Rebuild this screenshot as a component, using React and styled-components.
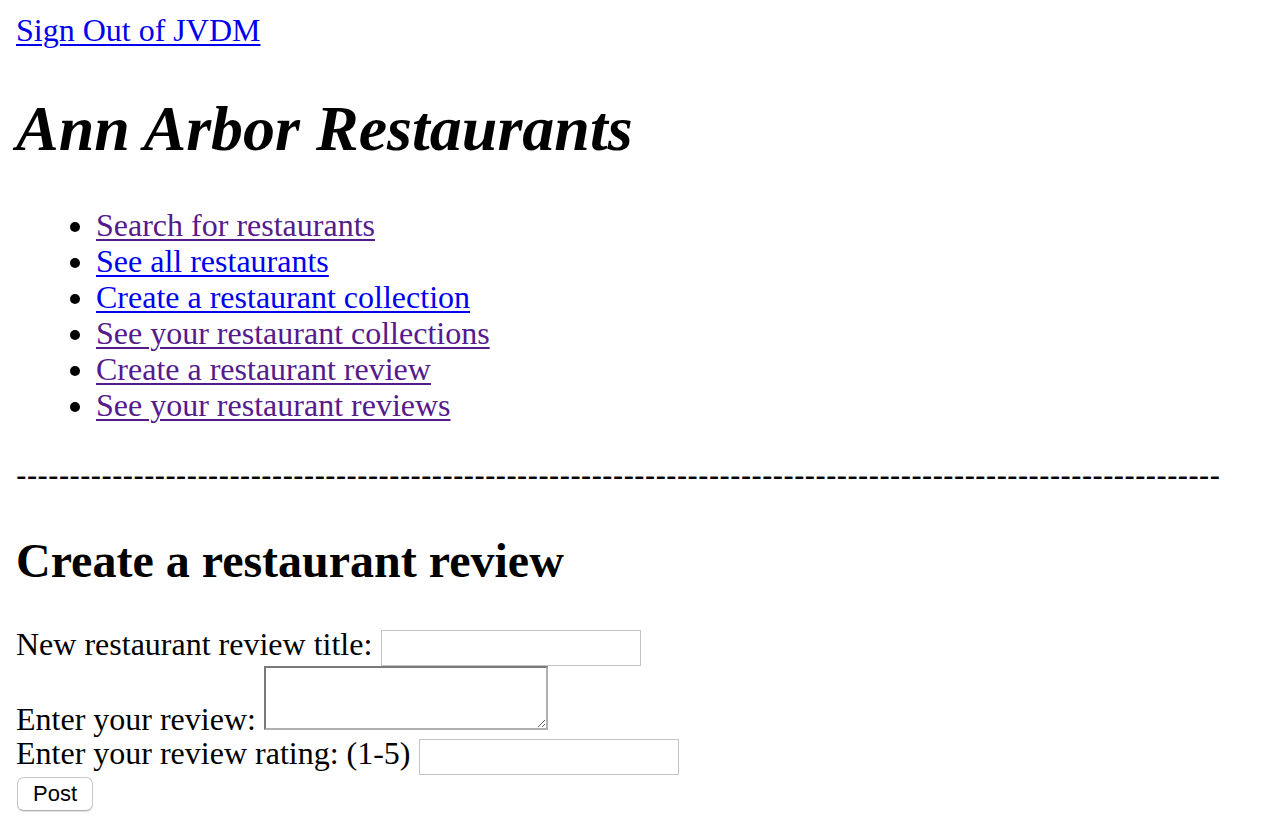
import styled, { createGlobalStyle } from 'styled-components';

const GlobalStyle = createGlobalStyle`
  html, body {
    margin: 0;
    padding: 0;
    background: #fff;
  }
  body {
    padding: 12px 16px 16px;
    font-family: "Liberation Serif", "Times New Roman", serif;
    font-size: 32px;
    line-height: 36px;
    color: #000;
  }
`;

const Link = styled.a`
  color: ${({ $visited }) => ($visited ? '#551a8b' : '#0000ee')};
  text-decoration: underline;
  text-underline-offset: 3px;
  text-decoration-thickness: 2px;
  cursor: pointer;
`;

const Title = styled.h1`
  font-size: 64px;
  line-height: 74px;
  font-style: italic;
  font-weight: 700;
  margin: 44px 0 41px;
`;

const NavList = styled.ul`
  margin: 0 0 34px;
  padding-left: 80px;
  list-style: disc;

  & > li {
    line-height: 36px;
  }
`;

const Divider = styled.div`
  font-family: "Liberation Sans", Arial, sans-serif;
  font-size: 32px;
  line-height: 36px;
  white-space: nowrap;
  overflow: hidden;
  margin: 0;
`;

const SectionTitle = styled.h2`
  font-size: 48px;
  line-height: 56px;
  font-weight: 700;
  margin: 40px 0 37px;
`;

const Form = styled.form`
  margin: 0;
`;

const Row = styled.div`
  line-height: 36px;
  margin-top: ${({ $pull }) => ($pull ? `-${$pull}px` : '0')};
`;

const TextInput = styled.input`
  box-sizing: border-box;
  width: 260px;
  height: 36px;
  border: 1px solid #c4c4c4;
  padding: 2px 4px;
  margin: 0 0 0 ${({ $gap }) => ($gap != null ? $gap : 1)}px;
  font-size: 22px;
  vertical-align: baseline;
  outline: none;
`;

const TextArea = styled.textarea`
  box-sizing: border-box;
  width: 284px;
  height: 64px;
  border: 2px solid #7a7a7a;
  border-right-color: #b0b0b0;
  border-bottom-color: #b0b0b0;
  margin: 0;
  padding: 2px;
  font-size: 22px;
  vertical-align: baseline;
  resize: both;
  outline: none;
`;

const Button = styled.button`
  box-sizing: border-box;
  width: 76px;
  height: 34px;
  margin: 0 0 0 1px;
  padding: 0;
  background: #fff;
  border: 1px solid #c8c8c8;
  border-bottom-color: #b0b0b0;
  border-radius: 7px;
  box-shadow: 0 1px 1px rgba(0, 0, 0, 0.12);
  font-family: "Liberation Sans", Arial, sans-serif;
  font-size: 22px;
  color: #000;
  cursor: pointer;
`;

const links = [
  { label: 'Search for restaurants', visited: true },
  { label: 'See all restaurants', visited: false },
  { label: 'Create a restaurant collection', visited: false },
  { label: 'See your restaurant collections', visited: true },
  { label: 'Create a restaurant review', visited: true },
  { label: 'See your restaurant reviews', visited: true }
];

const App = () => {
  return (
    <>
      <GlobalStyle />
      <Link href="#">Sign Out of JVDM</Link>
      <Title>Ann Arbor Restaurants</Title>
      <NavList>
        {links.map((item) => (
          <li key={item.label}>
            <Link href="#" $visited={item.visited}>
              {item.label}
            </Link>
          </li>
        ))}
      </NavList>
      <Divider>{'-'.repeat(113)}</Divider>
      <SectionTitle>Create a restaurant review</SectionTitle>
      <Form onSubmit={(e) => e.preventDefault()}>
        <Row>
          New restaurant review title: <TextInput type="text" />
        </Row>
        <Row>
          Enter your review: <TextArea />
        </Row>
        <Row $pull={2}>
          Enter your review rating: (1-5) <TextInput type="text" $gap={0} />
        </Row>
        <Row $pull={3}>
          <Button type="submit">Post</Button>
        </Row>
      </Form>
    </>
  );
};

export default App;
